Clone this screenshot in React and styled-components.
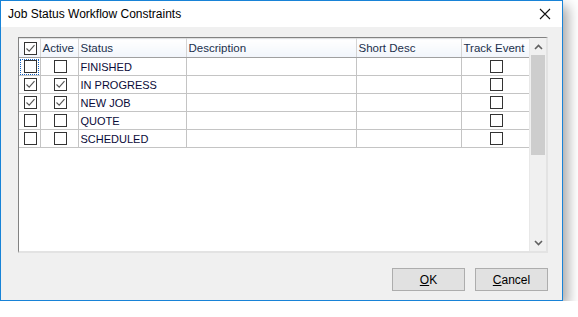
import React from 'react';
import styled, { createGlobalStyle } from 'styled-components';

const GlobalStyle = createGlobalStyle`
    body {
        margin: 0;
        background: #ffffff;
        font-family: "Liberation Sans", Arial, sans-serif;
    }
`

const rows = [
    { status: 'FINISHED', selected: false, active: false, focused: true },
    { status: 'IN PROGRESS', selected: true, active: true },
    { status: 'NEW JOB', selected: true, active: true },
    { status: 'QUOTE', selected: false, active: false },
    { status: 'SCHEDULED', selected: false, active: false },
];

const columns = [
    { label: '', width: 21 },
    { label: 'Active', width: 38 },
    { label: 'Status', width: 108 },
    { label: 'Description', width: 170 },
    { label: 'Short Desc', width: 105 },
    { label: 'Track Event', width: 68 },
];

const CheckBox = ({ checked }) => (
    <StBox>
        {checked && (
            <svg width="11" height="11" viewBox="0 0 11 11">
                <path d="M1.5 5.5 L4.2 8.2 L9.5 2.2" fill="none" stroke="#555" strokeWidth="1.1" />
            </svg>
        )}
    </StBox>
);

const App = () => {
    return (
        <>
            <GlobalStyle />
            <StWindow>
                <StTitleBar>
                    <StTitle>Job Status Workflow Constraints</StTitle>
                    <StClose>
                        <svg width="12" height="12" viewBox="0 0 12 12">
                            <path d="M1 1 L11 11 M11 1 L1 11" stroke="#111" strokeWidth="1.1" />
                        </svg>
                    </StClose>
                </StTitleBar>
                <StBody>
                    <StGrid>
                        <StTableArea>
                            <StTable>
                                <colgroup>
                                    {columns.map((c, i) => <col key={i} style={{ width: c.width }} />)}
                                </colgroup>
                                <thead>
                                    <tr>
                                        <StHead $center>
                                            <CheckBox checked />
                                        </StHead>
                                        {columns.slice(1).map((c) => (
                                            <StHead key={c.label}>{c.label}</StHead>
                                        ))}
                                    </tr>
                                </thead>
                                <tbody>
                                    {rows.map((r) => (
                                        <tr key={r.status}>
                                            <StCell $center $focused={r.focused}><CheckBox checked={r.selected} /></StCell>
                                            <StCell $center><CheckBox checked={r.active} /></StCell>
                                            <StCell>{r.status}</StCell>
                                            <StCell></StCell>
                                            <StCell></StCell>
                                            <StCell $center><CheckBox /></StCell>
                                        </tr>
                                    ))}
                                </tbody>
                            </StTable>
                        </StTableArea>
                        <StScrollBar>
                            <StArrow>
                                <svg width="9" height="6" viewBox="0 0 9 6">
                                    <path d="M1 5 L4.5 1.5 L8 5" fill="none" stroke="#606060" strokeWidth="1.6" />
                                </svg>
                            </StArrow>
                            <StTrack>
                                <StThumb />
                            </StTrack>
                            <StArrow>
                                <svg width="9" height="6" viewBox="0 0 9 6">
                                    <path d="M1 1 L4.5 4.5 L8 1" fill="none" stroke="#606060" strokeWidth="1.6" />
                                </svg>
                            </StArrow>
                        </StScrollBar>
                    </StGrid>
                    <StButtons>
                        <StButton><u>O</u>K</StButton>
                        <StButton><u>C</u>ancel</StButton>
                    </StButtons>
                </StBody>
            </StWindow>
        </>
    );
};

const StWindow = styled.div`
    width: 561px;
    height: 299px;
    border: 1px solid #1883d7;
    background: #f0f0f0;
    box-shadow: 5px 6px 12px rgba(0, 0, 0, 0.35);
    display: flex;
    flex-direction: column;
`

const StTitleBar = styled.div`
    height: 26px;
    background: #ffffff;
    display: flex;
    align-items: center;
    justify-content: space-between;
    padding-left: 7px;
`

const StTitle = styled.div`
    font-size: 12px;
    color: #000;
`

const StClose = styled.div`
    width: 34px;
    height: 26px;
    display: flex;
    align-items: center;
    justify-content: center;
`

const StBody = styled.div`
    flex: 1;
    display: flex;
    flex-direction: column;
    padding: 10px 14px 0 17px;
`

const StGrid = styled.div`
    height: 213px;
    display: flex;
    background: #ffffff;
    border-style: solid;
    border-width: 1px 2px 2px 1px;
    border-color: #828282 #e3e3e3 #e3e3e3 #828282;
`

const StTableArea = styled.div`
    width: 510px;
    background: #ffffff;
`

const StTable = styled.table`
    width: 510px;
    border-collapse: collapse;
    table-layout: fixed;
    font-size: 11px;
`

const StHead = styled.th`
    height: 18px;
    padding: 0 0 0 2px;
    font-weight: normal;
    text-align: ${(props) => props.$center ? 'center' : 'left'};
    color: #1b2f4c;
    font-size: 11.5px;
    line-height: 18px;
    background: linear-gradient(#ffffff, #f1f5fb);
    border-right: 1px solid #d5d5d5;
    border-bottom: 1px solid #a0a0a0;
    border-top: 1px solid #e0e0e0;
    white-space: nowrap;
    overflow: hidden;
    vertical-align: middle;
    & > div { margin: 0 auto; }
`

const StCell = styled.td`
    height: 17px;
    padding: 0 0 0 2px;
    color: #0a0a38;
    text-align: ${(props) => props.$center ? 'center' : 'left'};
    border-right: 1px solid #c4c4c4;
    border-bottom: 1px solid #c4c4c4;
    outline: ${(props) => props.$focused ? '1px dotted #1060c0' : 'none'};
    outline-offset: -2px;
    white-space: nowrap;
    vertical-align: middle;
    & > div { margin: 0 auto; }
`

const StBox = styled.div`
    width: 11px;
    height: 11px;
    border: 1px solid #333333;
    background: #ffffff;
    display: flex;
    align-items: center;
    justify-content: center;
`

const StScrollBar = styled.div`
    width: 17px;
    background: #f0f0f0;
    display: flex;
    flex-direction: column;
    border-left: 1px solid #e8e8e8;
`

const StArrow = styled.div`
    height: 17px;
    display: flex;
    align-items: center;
    justify-content: center;
`

const StTrack = styled.div`
    flex: 1;
    padding: 0 1px;
`

const StThumb = styled.div`
    height: 100px;
    background: #cdcdcd;
`

const StButtons = styled.div`
    display: flex;
    justify-content: flex-end;
    gap: 10px;
    margin-top: 15px;
`

const StButton = styled.button`
    width: 73px;
    height: 23px;
    background: #e1e1e1;
    border: 1px solid #adadad;
    font-family: "Liberation Sans", Arial, sans-serif;
    font-size: 12px;
    color: #000;
    padding: 0;
`

export default App;
